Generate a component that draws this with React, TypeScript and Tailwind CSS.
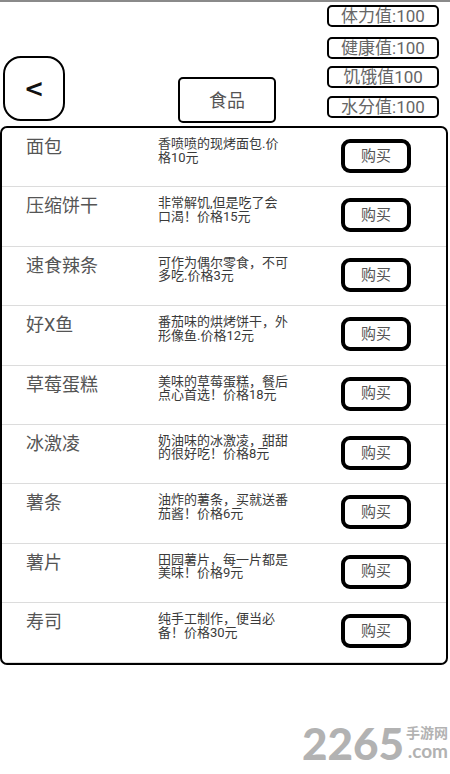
const foods = [
  { name: "面包", desc: "香喷喷的现烤面包.价格10元" },
  { name: "压缩饼干", desc: "非常解饥,但是吃了会口渴！价格15元" },
  { name: "速食辣条", desc: "可作为偶尔零食，不可多吃.价格3元" },
  { name: "好X鱼", desc: "番茄味的烘烤饼干，外形像鱼.价格12元" },
  { name: "草莓蛋糕", desc: "美味的草莓蛋糕，餐后点心首选！价格18元" },
  { name: "冰激凌", desc: "奶油味的冰激凌，甜甜的很好吃！价格8元" },
  { name: "薯条", desc: "油炸的薯条，买就送番茄酱！价格6元" },
  { name: "薯片", desc: "田园薯片，每一片都是美味！价格9元" },
  { name: "寿司", desc: "纯手工制作，便当必备！价格30元" },
];

const StatBox = ({ label, className }: { label: string; className: string }) => (
  <div
    className={`w-[112px] h-[22px] border-2 border-black rounded-[5px] flex items-center justify-center text-[17px] leading-none text-[#666] ${className}`}
  >
    {label}
  </div>
);

export default function App() {
  return (
    <div
      className="relative w-[450px] h-[774px] bg-white overflow-hidden"
      style={{ fontFamily: 'Roboto, "Noto Sans CJK SC", sans-serif' }}
    >
      <div className="h-[2px] bg-[#8a8a8a]" />

      {/* HEADER */}
      <div className="flex h-[124px]">
        <div className="ml-[3px] mt-[54px] w-[62px] h-[65px] border-2 border-black rounded-[18px] flex items-center justify-center">
          <span className="text-[24px] font-black text-[#111] leading-none" style={{ fontFamily: '"DejaVu Sans", sans-serif' }}>
            &lt;
          </span>
        </div>
        <div className="ml-[113px] mt-[75px] w-[98px] h-[46px] border-2 border-black rounded-[5px] flex items-center justify-center text-[18px] text-[#555]">
          食品
        </div>
        <div className="ml-[51px] flex flex-col">
          <StatBox label="体力值:100" className="mt-[3px]" />
          <StatBox label="健康值:100" className="mt-[10px]" />
          <StatBox label="饥饿值100" className="mt-[7px]" />
          <StatBox label="水分值:100" className="mt-[8px]" />
        </div>
      </div>

      {/* FOOD LIST */}
      <div className="w-[448px] border-2 border-black rounded-[7px] overflow-hidden">
        {foods.map((f) => (
          <div key={f.name} className="h-[59.4px] border-b border-[#dcdcdc] flex items-start">
            <div className="w-[156px] pl-[24px] pt-[8px] text-[18px] leading-[22px] text-[#555]">{f.name}</div>
            <div className="w-[132px] pt-[9px] text-[13px] leading-[13.5px] text-[#3a3a3a]">{f.desc}</div>
            <div className="ml-[51px] mt-[11px] w-[70px] h-[34px] border-[4px] border-black rounded-[9px] flex items-center justify-center text-[15px] text-[#555]">
              购买
            </div>
          </div>
        ))}
      </div>

      {/* WATERMARK */}
      <div className="absolute right-[2px] top-[721px] flex items-center text-[#b2b2b2]">
        <span className="text-[44px] font-black leading-none" style={{ fontFamily: 'Lato, sans-serif' }}>
          2265
        </span>
        <div className="flex flex-col items-end ml-[2px]">
          <span className="text-[14px] leading-[15px] font-bold">手游网</span>
          <span className="text-[19px] leading-[19px] font-bold" style={{ fontFamily: 'Lato, sans-serif' }}>
            .com
          </span>
        </div>
      </div>
    </div>
  );
}
